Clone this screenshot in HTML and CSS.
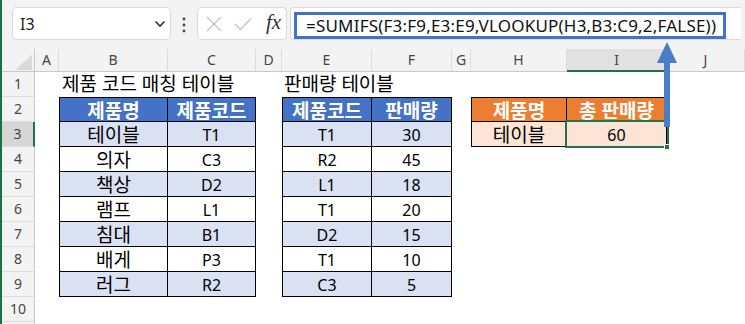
FILE: index.html
```html
<!DOCTYPE html>
<html lang="ko">
<head>
<meta charset="utf-8">
<title>SUMIFS VLOOKUP</title>
<link rel="stylesheet" href="styles.css">
</head>
<body>
<div class="app">
  <div class="toolbar">
    <div class="namebox">
      <span class="name">I3</span>
      <svg class="chev" width="12" height="8" viewBox="0 0 12 8"><path d="M1.5 1.5 L6 6 L10.5 1.5" fill="none" stroke="#333" stroke-width="1.6"/></svg>
    </div>
    <svg class="dots" width="4" height="16" viewBox="0 0 4 16"><circle cx="2" cy="2" r="1.4" fill="#444"/><circle cx="2" cy="8" r="1.4" fill="#444"/><circle cx="2" cy="14" r="1.4" fill="#444"/></svg>
    <div class="fxbox">
      <svg class="icon-x" width="16" height="16" viewBox="0 0 16 16"><path d="M1 1 L15 15 M15 1 L1 15" stroke="#c4c4c4" stroke-width="1.3" fill="none"/></svg>
      <svg class="icon-check" width="18" height="14" viewBox="0 0 18 14"><path d="M1 7 L6.5 12.5 L17 1.5" stroke="#c4c4c4" stroke-width="1.3" fill="none"/></svg>
      <span class="fx">fx</span>
    </div>
    <div class="formula">
      <div class="formula-mark">=SUMIFS(F3:F9,E3:E9,VLOOKUP(H3,B3:C9,2,FALSE))</div>
    </div>
  </div>

  <div class="sheet">
    <div class="ch corner"><svg width="33" height="23" viewBox="0 0 33 23"><polygon points="30,6 30,21 13,21" fill="#d9d9d9"/></svg></div>
    <div class="ch">A</div>
    <div class="ch">B</div>
    <div class="ch">C</div>
    <div class="ch">D</div>
    <div class="ch">E</div>
    <div class="ch">F</div>
    <div class="ch">G</div>
    <div class="ch">H</div>
    <div class="ch sel">I</div>
    <div class="ch">J</div>

    <div class="rows">
      <div class="rh">1</div>
      <div class="rh">2</div>
      <div class="rh sel">3</div>
      <div class="rh">4</div>
      <div class="rh">5</div>
      <div class="rh">6</div>
      <div class="rh">7</div>
      <div class="rh">8</div>
      <div class="rh">9</div>
      <div class="rh">10</div>
      <div class="rh"></div>
    </div>

    <div class="title title1">제품 코드 매칭 테이블</div>
    <div class="title title2">판매량 테이블</div>

    <div class="tbl tbl1">
      <div class="c hd blue">제품명</div><div class="c hd blue">제품코드</div>
      <div class="c ko alt">테이블</div><div class="c en alt">T1</div>
      <div class="c ko">의자</div><div class="c en">C3</div>
      <div class="c ko alt">책상</div><div class="c en alt">D2</div>
      <div class="c ko">램프</div><div class="c en">L1</div>
      <div class="c ko alt">침대</div><div class="c en alt">B1</div>
      <div class="c ko">배게</div><div class="c en">P3</div>
      <div class="c ko alt">러그</div><div class="c en alt">R2</div>
    </div>

    <div class="tbl tbl2">
      <div class="c hd blue">제품코드</div><div class="c hd blue">판매량</div>
      <div class="c en alt">T1</div><div class="c en alt">30</div>
      <div class="c en">R2</div><div class="c en">45</div>
      <div class="c en alt">L1</div><div class="c en alt">18</div>
      <div class="c en">T1</div><div class="c en">20</div>
      <div class="c en alt">D2</div><div class="c en alt">15</div>
      <div class="c en">T1</div><div class="c en">10</div>
      <div class="c en alt">C3</div><div class="c en alt">5</div>
    </div>

    <div class="tbl tbl3">
      <div class="c hd orange">제품명</div><div class="c hd orange">총 판매량</div>
      <div class="c ko peach">테이블</div><div class="c en peach active">60</div>
    </div>
  </div>

  <svg class="arrow" width="24" height="90" viewBox="0 0 24 90">
    <polygon points="12,2 22,23 15,23 15,87 9,87 9,23 2,23" fill="#4a7cc8"/>
  </svg>
</div>
</body>
</html>
```

FILE: styles.css
```css
html, body {
  margin: 0;
  padding: 0;
}
body {
  width: 745px;
  height: 324px;
  overflow: hidden;
  background: #ffffff;
  font-family: "Noto Sans", "Noto Sans CJK KR", sans-serif;
  color: #000;
}
.app {
  position: relative;
  height: 324px;
  border-left: 2px solid #1e7145;
  box-sizing: border-box;
  overflow: hidden;
}

/* ---------- toolbar / formula bar ---------- */
.toolbar {
  height: 49px;
  box-sizing: border-box;
  background: #f3f3f3;
  display: flex;
  align-items: flex-start;
  padding: 7px 0 0 10px;
}
.namebox {
  width: 159px;
  height: 33px;
  box-sizing: border-box;
  background: #fff;
  border: 1px solid #dadada;
  border-radius: 4px;
  display: flex;
  align-items: center;
  justify-content: space-between;
  padding: 0 4px 0 7px;
}
.name {
  font-size: 16px;
  color: #222;
}
.chev {
  display: block;
}
.dots {
  display: block;
  margin: 10px 0 0 11px;
}
.fxbox {
  width: 90px;
  height: 33px;
  box-sizing: border-box;
  margin-left: 11px;
  background: #fff;
  border: 1px solid #dadada;
  border-radius: 4px;
  display: flex;
  align-items: center;
  padding-left: 8px;
}
.icon-x {
  display: block;
}
.icon-check {
  display: block;
  margin-left: 12px;
}
.fx {
  font-family: "Liberation Serif", serif;
  font-style: italic;
  font-size: 21px;
  color: #333;
  margin-left: 14px;
  margin-top: -2px;
}
.formula {
  width: 451px;
  height: 33px;
  box-sizing: border-box;
  margin-left: 3px;
  background: #fff;
  border: 1px solid #dadada;
  border-right: none;
  border-radius: 4px 0 0 4px;
  padding: 4px 0 0 3px;
}
.formula-mark {
  width: 432px;
  height: 27px;
  box-sizing: border-box;
  border: 3px solid #4472c4;
  padding-left: 9px;
  font-size: 17px;
  letter-spacing: 0.2px;
  line-height: 21px;
  white-space: nowrap;
  color: #111;
}

/* ---------- sheet grid ---------- */
.sheet {
  display: grid;
  grid-template-columns: 33px 24px 109px 88px 26px 90px 80px 19px 96px 100px 78px;
  grid-template-rows: 23px repeat(11, 25px);
}
.ch {
  background: #f3f3f3;
  border-bottom: 1px solid #c8c8c8;
  border-right: 1px solid #dcdcdc;
  box-sizing: border-box;
  font-size: 14px;
  color: #444;
  text-align: center;
  line-height: 22px;
}
.ch.corner {
  border-right: 1px solid #c8c8c8;
  line-height: 0;
}
.ch.sel {
  background: #e1e1e1;
  border-bottom: 2px solid #217346;
  line-height: 21px;
}
.rows {
  grid-column: 1;
  grid-row: 2 / -1;
  display: flex;
  flex-direction: column;
}
.rh {
  height: 25px;
  flex: none;
  box-sizing: border-box;
  background: #f3f3f3;
  border-right: 1px solid #c8c8c8;
  border-bottom: 1px solid #dcdcdc;
  font-size: 14px;
  color: #444;
  text-align: center;
  line-height: 24px;
}
.rh.sel {
  background: #d6d6d6;
  border-right: 2px solid #217346;
}

.title {
  font-size: 19px;
  line-height: 25px;
  white-space: nowrap;
  grid-row: 2;
}
.title1 {
  grid-column: 3 / 6;
  padding-left: 3px;
}
.title2 {
  grid-column: 6 / 9;
  padding-left: 2px;
}

/* ---------- tables ---------- */
.tbl {
  display: grid;
  border-left: 1px solid #000;
  border-top: 1px solid #000;
  grid-template-rows: 24px;
  grid-auto-rows: 25px;
}
.tbl1 {
  grid-column: 3 / 5;
  grid-row: 3 / 11;
  grid-template-columns: 108px 88px;
}
.tbl2 {
  grid-column: 6 / 8;
  grid-row: 3 / 11;
  grid-template-columns: 89px 80px;
}
.tbl3 {
  grid-column: 9 / 11;
  grid-row: 3 / 5;
  grid-template-columns: 95px 100px;
}
.c {
  box-sizing: border-box;
  border-right: 1px solid #000;
  border-bottom: 1px solid #000;
  display: flex;
  align-items: center;
  justify-content: center;
  white-space: nowrap;
  background: #fff;
}
.hd {
  color: #fff;
  font-weight: 700;
  font-size: 19px;
}
.blue { background: #4472c4; }
.orange { background: #ed7d31; }
.alt { background: #d9e1f2; }
.peach { background: #fce4d6; }
.ko { font-size: 19px; }
.en { font-size: 16px; padding-top: 1px; }

.active {
  position: relative;
}
.active::after {
  content: "";
  position: absolute;
  left: -2px;
  top: -2px;
  right: -3px;
  bottom: -2px;
  border: 2px solid #217346;
}
.active::before {
  content: "";
  position: absolute;
  right: -4px;
  bottom: -4px;
  width: 4px;
  height: 4px;
  background: #217346;
  border: 1px solid #fff;
  z-index: 1;
}

/* ---------- annotation arrow ---------- */
.arrow {
  position: absolute;
  left: 653px;
  top: 40px;
  display: block;
}
```
